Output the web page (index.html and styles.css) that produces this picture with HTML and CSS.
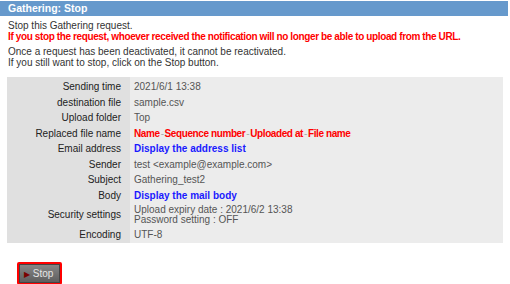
FILE: index.html
```html
<!DOCTYPE html>
<html lang="en">
<head>
    <meta charset="UTF-8">
    <title>Gathering: Stop</title>
    <link rel="stylesheet" href="styles.css">
</head>
<body>
    <div class="titlebar">Gathering: Stop</div>
    <div class="content">
        <p class="intro">
            Stop this Gathering request.<br>
            <strong class="warn">If you stop the request, whoever received the notification will no longer be able to upload from the URL.</strong>
        </p>
        <p class="intro">
            Once a request has been deactivated, it cannot be reactivated.<br>
            If you still want to stop, click on the Stop button.
        </p>
        <table class="detail">
            <tr><th>Sending time</th><td>2021/6/1 13:38</td></tr>
            <tr><th>destination file</th><td>sample.csv</td></tr>
            <tr><th>Upload folder</th><td>Top</td></tr>
            <tr><th>Replaced file name</th><td class="red">Name<span class="sep">-</span>Sequence number<span class="sep">-</span>Uploaded at<span class="sep">-</span>File name</td></tr>
            <tr><th>Email address</th><td><a class="link" href="#">Display the address list</a></td></tr>
            <tr><th>Sender</th><td>test &lt;example@example.com&gt;</td></tr>
            <tr><th>Subject</th><td>Gathering_test2</td></tr>
            <tr><th>Body</th><td><a class="link" href="#">Display the mail body</a></td></tr>
            <tr class="tall"><th>Security settings</th><td>Upload expiry date : 2021/6/2 13:38<br>Password setting : OFF</td></tr>
            <tr><th>Encoding</th><td>UTF-8</td></tr>
        </table>
        <div class="actions">
            <button class="stopbtn"><span class="tri">&#9654;</span> Stop</button>
        </div>
    </div>
</body>
</html>
```

FILE: styles.css
```css
body{
    margin: 0;
    font-family: "Liberation Sans", Arial, sans-serif;
    font-size: 10px;
    color: #333;
    background: #fff;
}
.titlebar{
    margin: 1px 2px 0 0;
    height: 15px;
    line-height: 15px;
    padding-left: 8px;
    background: #6699cc;
    color: #fff;
    font-size: 10.5px;
    font-weight: bold;
}
.content{
    padding: 4px 7px 0 7px;
}
.intro{
    margin: 0 0 4px 1px;
    line-height: 11px;
}
.warn{
    color: #ff0000;
    letter-spacing: -0.38px;
}
.detail{
    width: 496px;
    margin-top: 9px;
    border-collapse: collapse;
    background: #ececec;
}
.detail th{
    width: 114px;
    padding: 0 9px 0 0;
    height: 15.5px;
    background: #e0e0e0;
    text-align: right;
    font-weight: normal;
    color: #222;
}
.detail td{
    padding: 0 0 0 4px;
    height: 15.5px;
    color: #555;
}
.detail tr:first-child th, .detail tr:first-child td{
    padding-top: 2px;
}
.detail tr.tall th, .detail tr.tall td{
    height: 24px;
    line-height: 10px;
}
.red{
    color: #ff0000 !important;
    font-weight: bold;
    letter-spacing: -0.4px;
}
.sep{
    color: #aaa;
    font-weight: normal;
    margin: 0 1px;
}
.link{
    color: #1a1aff;
    font-weight: bold;
    text-decoration: none;
}
.actions{
    padding: 19px 0 0 10px;
}
.stopbtn{
    border: 2px solid #ff0000;
    background: linear-gradient(#888, #5c5c5c);
    color: #e6e6e6;
    font-family: "Liberation Sans", Arial, sans-serif;
    font-size: 10px;
    padding: 4px 7px 4px 5px;
    border-radius: 2px;
    box-shadow: inset 0 0 0 1px #444;
}
.tri{
    color: #7a0000;
    font-size: 8px;
}
```
